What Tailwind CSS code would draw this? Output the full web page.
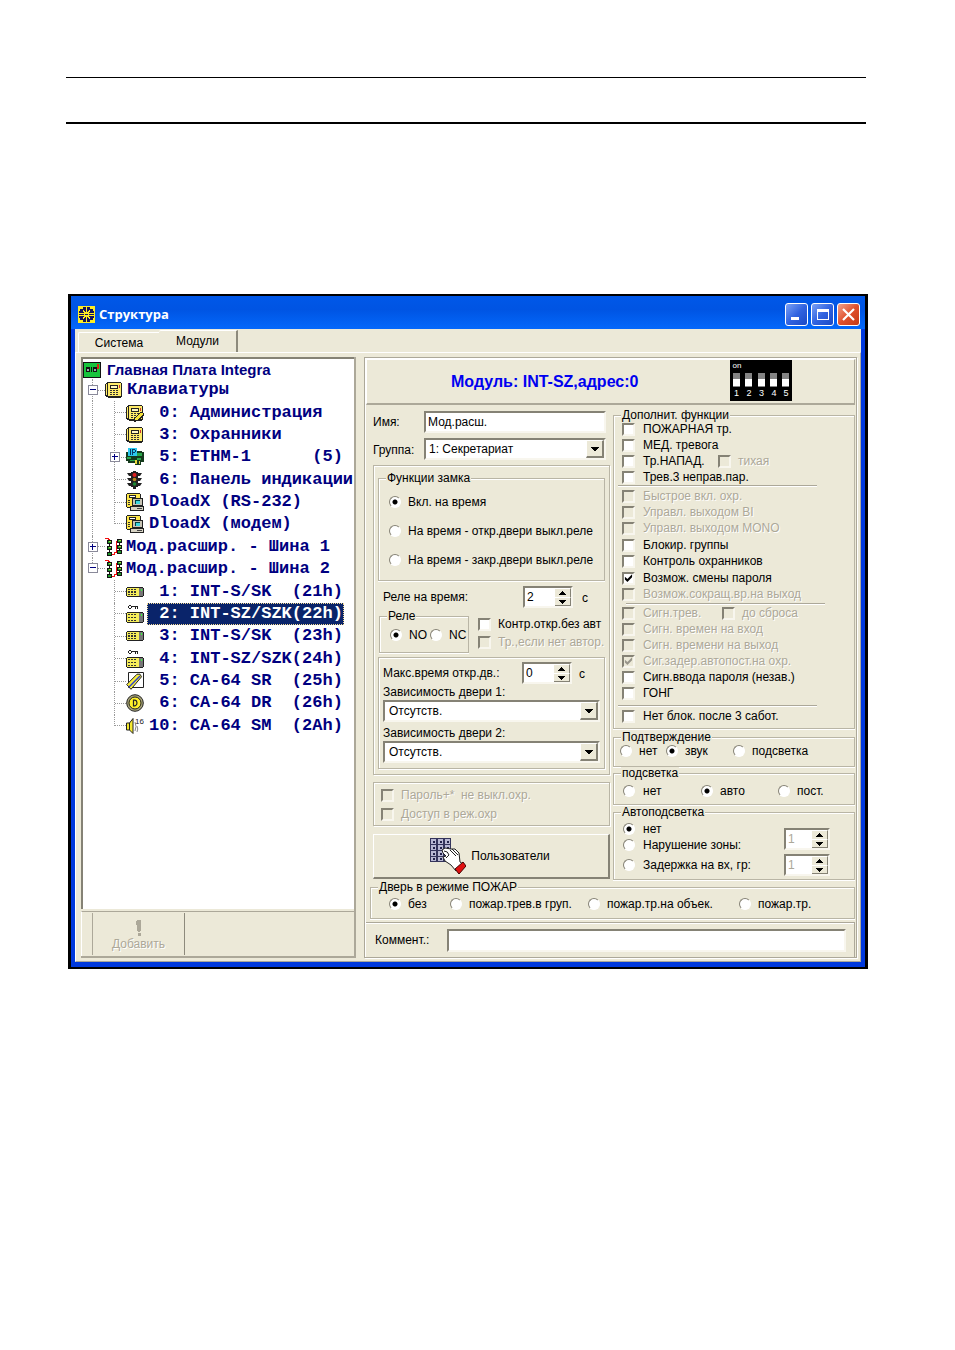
<!DOCTYPE html>
<html lang="ru">
<head>
    <meta charset="utf-8" />
    <meta name="viewport" content="width=device-width, initial-scale=1" />
    <title>Структура</title>
    <script src="https://cdn.jsdelivr.net/npm/@tailwindcss/browser@4"></script>
</head>
<body class="bg-white font-['Liberation_Sans',Arial,sans-serif] text-xs leading-4 text-black">
    <!-- shared icons -->
    <svg class="hidden">
        <symbol id="i-keypad" viewBox="0 0 18 18">
            <path d="M2 1h14v1h1v14h-1v1H3v-1H1v-1H0V3h1V2h1z" fill="#222" />
            <path d="M1 3h1v11H1zM3 2h13v13H3z" fill="#ffec6a" />
            <path d="M5 4h8v4H5z" fill="#222" /><path d="M6 5h6v2H6z" fill="#fff8c0" />
            <path d="M14 4h1v3h-1z" fill="#c33" />
            <path d="M5 9h2v1H5zM8 9h2v1H8zM11 9h2v1h-2zM5 11h2v1H5zM8 11h2v1H8zM11 11h2v1h-2zM5 13h2v1H5zM8 13h2v1H8zM11 13h2v1h-2z" fill="#333" />
        </symbol>
        <symbol id="i-download" viewBox="0 0 18 18">
            <path d="M1 0h13v1h1v14H1v-1H0V1h1z" fill="#222" /><path d="M1 1h13v13H1z" fill="#ffe84a" />
            <path d="M3 2h7v3H3z" fill="#222" /><path d="M4 3h5v1H4z" fill="#fff" />
            <path d="M2 7h2v1H2zM2 9h2v1H2zM2 11h2v1H2z" fill="#333" />
            <path d="M6 5h11v8H6z" fill="#222" /><path d="M7 6h9v6H7z" fill="#c8c4b4" />
            <path d="M9 7h5v4H9z" fill="#044" /><path d="M10 8h4v3h-4z" fill="#3cd6e0" />
            <path d="M4 13h14v5H4z" fill="#222" /><path d="M5 14h12v3H5z" fill="#d8d4c4" /><path d="M11 15h5v1h-5z" fill="#444" />
        </symbol>
        <symbol id="i-bus" viewBox="0 0 18 18">
            <path d="M0 0h4v1h1v15h4v-2h2V3h1V1h2v1h-1v2h-1v11h-2v2H4V2H3V1H0z" fill="#f01010" />
            <path d="M2 2h5v4H2zM2 8h5v4H2zM2 14h5v4H2zM12 1h5v4h-5zM12 7h5v4h-5zM12 12h5v4h-5zM4 6h1v2H4zM4 12h1v2H4zM14 5h1v2h-1zM14 11h1v1h-1z" fill="#111" />
            <path d="M3 3h3v2H3zM3 9h3v2H3zM3 15h3v2H3zM13 2h3v2h-3zM13 8h3v2h-3zM13 13h3v2h-3z" fill="#1f9a2c" />
            <path d="M4 3h2v1H4zM4 9h2v1H4zM14 2h2v1h-2zM14 8h2v1h-2z" fill="#a8dc3a" />
        </symbol>
        <symbol id="i-int" viewBox="0 0 18 18">
            <path d="M1 4h16v1h1v8h-1v1H1v-1H0V5h1z" fill="#222" />
            <path d="M1 5h12v8H1z" fill="#f6ee5a" /><path d="M13 5h4v8h-4z" fill="#777" />
            <path d="M15 6h1v2h-1z" fill="#3f3" />
            <path d="M2 6h2v1H2zM5 6h2v1H5zM8 6h2v1H8zM2 8h2v2H2zM5 8h2v2H5zM8 8h2v2H8zM2 11h2v1H2zM5 11h2v1H5zM8 11h2v1H8z" fill="#333" />
        </symbol>
        <symbol id="i-intkey" viewBox="0 0 18 18">
            <path d="M3 0h2v1h7v3h-1V2h-1v2H9V2H6v1H5v1H3V3H2V1h1zM3 1v2h2V1z" fill="#222" fill-rule="evenodd" />
            <path d="M1 7h16v1h1v9h-1v1H1v-1H0V8h1z" fill="#222" />
            <path d="M1 8h12v9H1z" fill="#f6ee5a" /><path d="M13 8h4v9h-4z" fill="#777" />
            <path d="M15 9h1v2h-1z" fill="#3f3" />
            <path d="M2 9h2v1H2zM5 9h2v1H5zM8 9h2v1H8zM2 12h2v1H2zM5 12h2v1H5zM8 12h2v1H8zM2 15h2v1H2zM5 15h2v1H5zM8 15h2v1H8z" fill="#333" />
        </symbol>
        <symbol id="i-spin" viewBox="0 0 7 4"><path d="M3 0h1v1h1v1h1v1h1v1H0V3h1V2h1V1h1z" fill="currentColor" /></symbol>
        <symbol id="i-drop" viewBox="0 0 8 4"><path d="M0 0h8v1H7v1H6v1H5v1H3V3H2V2H1V1H0z" fill="currentColor" /></symbol>
    </svg>

    <hr class="mx-[66px] mt-[77px] mr-[89px] h-px border-0 bg-black" />
    <hr class="mx-[66px] mt-[44px] mr-[89px] h-[2px] border-0 bg-black" />

    <div class="mt-[170px] mr-[87px] mb-10 ml-[68px] min-w-[800px] border-x-3 border-y-2 border-black bg-[#0039dd]">
        <!-- title bar -->
        <header class="flex h-[33px] items-center bg-linear-to-b from-[#0058e8] via-[#0054e3] via-40% to-[#0468fb] pt-[3px] pr-[5px] pl-[7px]">
            <svg class="size-[17px]" viewBox="0 0 17 17" shape-rendering="crispEdges">
                <path d="M0 0h17v17H0z" fill="#ffee22" />
                <path d="M5 1h3v5H7V5H6V4H5v2h1v1H1V5h1V3h3zM12 1H9v5h1V5h1V4h1v2h-1v1h5V5h-1V3h-3zM5 16h3v-5H7v1H6v1H5v-2h1v-1H1v2h1v2h3zM12 16H9v-5h1v1h1v1h1v-2h-1v-1h5v2h-1v2h-3zM1 8h5v1H1zM11 8h5v1h-5zM7 8h3v1H7z" fill="#15155a" />
            </svg>
            <h1 class="ml-[4px] flex-1 font-['Open_Sans','Noto_Sans',sans-serif] text-[13px] font-bold text-white">Структура</h1>
            <div class="flex gap-[3px]">
                <button aria-label="Свернуть" class="grid size-[23px] place-items-center rounded-[3px] border border-white bg-linear-to-br from-[#7ba0f5] via-[#3163e0] to-[#1a49c6]">
                    <svg class="size-[15px]" viewBox="0 0 15 15"><path d="M2 10h8v3H2z" fill="#fff" /></svg>
                </button>
                <button aria-label="Развернуть" class="grid size-[23px] place-items-center rounded-[3px] border border-white bg-linear-to-br from-[#7ba0f5] via-[#3163e0] to-[#1a49c6]">
                    <svg class="size-[15px]" viewBox="0 0 15 15"><path d="M2 2h12v11H2zM3 5v7h10V5z" fill="#fff" fill-rule="evenodd" /></svg>
                </button>
                <button aria-label="Закрыть" class="grid size-[23px] place-items-center rounded-[3px] border border-white bg-linear-to-br from-[#f0a08a] via-[#e0502c] to-[#c43a14]">
                    <svg class="size-[15px]" viewBox="0 0 15 15"><path d="M2 2l11 11M13 2L2 13" stroke="#fff" stroke-width="2.200" /></svg>
                </button>
            </div>
        </header>

        <div class="mx-[4px] mb-[5px] bg-[#ece9d8] pt-px">
            <nav class="flex h-[22px] items-end pl-[3px]">
                <button class="h-[20px] w-[81px] rounded-tl-[2px] border-t border-l border-white text-center">Система</button>
                <button class="h-[22px] w-[79px] rounded-tl-[2px] border-t border-r-2 border-t-white border-r-[#8d8a7c] pb-[2px] text-center">Модули</button>
            </nav>

            <main class="grid grid-cols-[275px_minmax(0,1fr)] gap-[8px] border border-white border-r-[#aca899] border-b-[#aca899] pt-[4px] pr-[3px] pb-[3px] pl-[5px]">
                <!-- module tree -->
                <section class="flex flex-col border-r-2 border-b-2 border-[#aca899] bg-[#ece9d8]">
                    <div class="flex-1 border-t-2 border-l-2 border-[#858275] bg-white pt-[2px] font-['Liberation_Mono','Courier_New',monospace] text-[17px] leading-5 font-bold text-[#000080]">
                        <div class="flex h-[18px] items-center gap-[5px]">
                            <svg class="size-[19px]" viewBox="0 0 19 19" shape-rendering="crispEdges">
                                <path d="M0 1h18v16H0z" fill="#111" /><path d="M1 2h16v14H1z" fill="#18c43c" />
                                <path d="M3 6h4v5H3zM8 6h1v5H8zM10 6h4v5h-4z" fill="#111" /><path d="M4 8h2v2H4zM11 8h2v2h-2z" fill="#9aa" /><path d="M14 3h2v5h-2z" fill="#d21" />
                            </svg>
                            <span class="font-['Liberation_Sans',Arial,sans-serif] text-[15px]">Главная Плата Integra</span>
                        </div>
                        <ul class="grid h-[358px] auto-rows-fr pl-[9px] whitespace-pre">
                            <li class="flex items-center">
                                <i class="relative flex w-[13px] items-center self-stretch border-l border-dotted border-[#999]"><i class="flex-1 border-t border-dotted border-[#999]"></i>
                                    <button aria-label="Свернуть ветвь" class="absolute -left-[5px] grid size-[10px] place-items-center border border-[#8a8a9a] bg-white"><svg class="size-[6px]" viewBox="0 0 6 6"><path d="M0 2h6v1H0z" fill="#000080" /></svg></button></i>
                                <svg class="size-[18px]" shape-rendering="crispEdges"><use href="#i-keypad" /></svg>
                                <span class="ml-[4px]">Клавиатуры</span>
                            </li>
                            <li class="flex items-center">
                                <i class="w-[22px] self-stretch border-l border-dotted border-[#999]"></i>
                                <i class="flex w-[12px] items-center self-stretch border-l border-dotted border-[#999]"><i class="flex-1 border-t border-dotted border-[#999]"></i></i>
                                <svg class="size-[18px]" viewBox="0 0 18 18" shape-rendering="crispEdges">
                                    <use href="#i-keypad" /><path d="M8 14l6-6h2l2 2v1l-6 6-4 1z" fill="#222" /><path d="M9 16v-2l5-5h2l1 1-6 6z" fill="#f6e23a" />
                                </svg>
                                <span class="ml-[4px] px-px"> 0: Администрация</span>
                            </li>
                            <li class="flex items-center">
                                <i class="w-[22px] self-stretch border-l border-dotted border-[#999]"></i>
                                <i class="flex w-[12px] items-center self-stretch border-l border-dotted border-[#999]"><i class="flex-1 border-t border-dotted border-[#999]"></i></i>
                                <svg class="size-[18px]" shape-rendering="crispEdges"><use href="#i-keypad" /></svg>
                                <span class="ml-[4px] px-px"> 3: Охранники</span>
                            </li>
                            <li class="flex items-center">
                                <i class="w-[22px] self-stretch border-l border-dotted border-[#999]"></i>
                                <i class="relative flex w-[12px] items-center self-stretch border-l border-dotted border-[#999]"><i class="flex-1 border-t border-dotted border-[#999]"></i>
                                    <button aria-label="Развернуть ветвь" class="absolute -left-[5px] grid size-[10px] place-items-center border border-[#8a8a9a] bg-white"><svg class="size-[6px]" viewBox="0 0 6 6"><path d="M0 2.500h6M2.500 0v6" stroke="#000080" /></svg></button></i>
                                <svg class="size-[18px]" viewBox="0 0 18 18" shape-rendering="crispEdges">
                                    <path d="M0 4h2v1h8V3h6v1h2v10h-3v3H9v-2H2v-2H0z" fill="#143a1c" />
                                    <path d="M1 9h4v2H1zM11 5h5v3h-5zM11 10h4v2h-4zM4 12h5v1H4z" fill="#2aa84a" />
                                    <path d="M2 0h9v8H2z" fill="#2cc8ee" /><path d="M4 1h1v6H4zM6 1h1v6H6zM7 1h2v1H7zM9 2h1v2H9zM7 4h2v1H7z" fill="#053a66" />
                                    <path d="M9 12h2v4H9zM13 13h1v3h-1z" fill="#e8d83a" />
                                </svg>
                                <span class="ml-[4px] px-px"> 5: ETHM-1      (5)</span>
                            </li>
                            <li class="flex items-center">
                                <i class="w-[22px] self-stretch border-l border-dotted border-[#999]"></i>
                                <i class="flex w-[12px] items-center self-stretch border-l border-dotted border-[#999]"><i class="flex-1 border-t border-dotted border-[#999]"></i></i>
                                <svg class="size-[18px]" viewBox="0 0 18 18">
                                    <path d="M5 1h7v15H5zM1 2h4v3H3zM1 7h4v3H3zM1 12h4v3H3zM16 2h-4v3h2zM16 7h-4v3h2zM16 12h-4v3h2zM7 16h3v2H7zM7 0h3v1H7z" fill="#222" />
                                    <circle cx="8.500" cy="4" r="2" fill="#e02020" /><circle cx="8.500" cy="8.500" r="1.800" fill="#b88a20" /><circle cx="8.500" cy="13" r="1.800" fill="#1c8a34" />
                                </svg>
                                <span class="ml-[4px] px-px"> 6: Панель индикации</span>
                            </li>
                            <li class="flex items-center">
                                <i class="w-[22px] self-stretch border-l border-dotted border-[#999]"></i>
                                <i class="flex w-[12px] items-center self-stretch border-l border-dotted border-[#999]"><i class="flex-1 border-t border-dotted border-[#999]"></i></i>
                                <svg class="size-[18px]" shape-rendering="crispEdges"><use href="#i-download" /></svg>
                                <span class="ml-[4px] px-px">DloadX (RS-232)</span>
                            </li>
                            <li class="flex items-center">
                                <i class="w-[22px] self-stretch border-l border-dotted border-[#999]"></i>
                                <i class="h-1/2 w-[12px] self-start border-b border-l border-dotted border-[#999]"></i>
                                <svg class="size-[18px]" shape-rendering="crispEdges"><use href="#i-download" /></svg>
                                <span class="ml-[4px] px-px">DloadX (модем)</span>
                            </li>
                            <li class="flex items-center">
                                <i class="relative flex w-[13px] items-center self-stretch border-l border-dotted border-[#999]"><i class="flex-1 border-t border-dotted border-[#999]"></i>
                                    <button aria-label="Развернуть ветвь" class="absolute -left-[5px] grid size-[10px] place-items-center border border-[#8a8a9a] bg-white"><svg class="size-[6px]" viewBox="0 0 6 6"><path d="M0 2.500h6M2.500 0v6" stroke="#000080" /></svg></button></i>
                                <svg class="size-[18px]" shape-rendering="crispEdges"><use href="#i-bus" /></svg>
                                <span class="ml-[3px]">Мод.расшир. - Шина 1</span>
                            </li>
                            <li class="flex items-center">
                                <i class="relative h-1/2 w-[13px] self-start border-b border-l border-dotted border-[#999]">
                                    <button aria-label="Свернуть ветвь" class="absolute -bottom-[5px] -left-[5px] grid size-[10px] place-items-center border border-[#8a8a9a] bg-white"><svg class="size-[6px]" viewBox="0 0 6 6"><path d="M0 2h6v1H0z" fill="#000080" /></svg></button></i>
                                <svg class="size-[18px]" shape-rendering="crispEdges"><use href="#i-bus" /></svg>
                                <span class="ml-[3px]">Мод.расшир. - Шина 2</span>
                            </li>
                            <li class="flex items-center pl-[22px]">
                                <i class="flex w-[12px] items-center self-stretch border-l border-dotted border-[#999]"><i class="flex-1 border-t border-dotted border-[#999]"></i></i>
                                <svg class="size-[18px]" shape-rendering="crispEdges"><use href="#i-int" /></svg>
                                <span class="ml-[4px] px-px"> 1: INT-S/SK  (21h)</span>
                            </li>
                            <li class="flex items-center pl-[22px]">
                                <i class="flex w-[12px] items-center self-stretch border-l border-dotted border-[#999]"><i class="flex-1 border-t border-dotted border-[#999]"></i></i>
                                <svg class="size-[18px]" shape-rendering="crispEdges"><use href="#i-intkey" /></svg>
                                <span class="ml-[3px] self-stretch border border-dotted border-[#f5db95] bg-[#0a246a] pl-px text-white"> 2: INT-SZ/SZK(22h)</span>
                            </li>
                            <li class="flex items-center pl-[22px]">
                                <i class="flex w-[12px] items-center self-stretch border-l border-dotted border-[#999]"><i class="flex-1 border-t border-dotted border-[#999]"></i></i>
                                <svg class="size-[18px]" shape-rendering="crispEdges"><use href="#i-int" /></svg>
                                <span class="ml-[4px] px-px"> 3: INT-S/SK  (23h)</span>
                            </li>
                            <li class="flex items-center pl-[22px]">
                                <i class="flex w-[12px] items-center self-stretch border-l border-dotted border-[#999]"><i class="flex-1 border-t border-dotted border-[#999]"></i></i>
                                <svg class="size-[18px]" shape-rendering="crispEdges"><use href="#i-intkey" /></svg>
                                <span class="ml-[4px] px-px"> 4: INT-SZ/SZK(24h)</span>
                            </li>
                            <li class="flex items-center pl-[22px]">
                                <i class="flex w-[12px] items-center self-stretch border-l border-dotted border-[#999]"><i class="flex-1 border-t border-dotted border-[#999]"></i></i>
                                <svg class="size-[18px]" viewBox="0 0 18 18">
                                    <path d="M2.500 .5h15v15h-15z" fill="#fff" stroke="#222" />
                                    <path d="M.7 12.500L11 2.200h3l1.500 2.600L5 17.300z" fill="#f8ee3c" stroke="#222" /><path d="M3 15L14 4" stroke="#2a3fd0" stroke-width="1.500" />
                                </svg>
                                <span class="ml-[4px] px-px"> 5: CA-64 SR  (25h)</span>
                            </li>
                            <li class="flex items-center pl-[22px]">
                                <i class="flex w-[12px] items-center self-stretch border-l border-dotted border-[#999]"><i class="flex-1 border-t border-dotted border-[#999]"></i></i>
                                <svg class="size-[18px]" viewBox="0 0 18 18">
                                    <circle cx="9" cy="9" r="8.300" fill="#a8a478" stroke="#222" /><circle cx="9" cy="9" r="6" fill="#fff02a" stroke="#222" />
                                    <path d="M7.500 6.200h1.500q2 .4 2 2.800t-2 2.800H7.500z" fill="none" stroke="#222" stroke-width="1.200" />
                                </svg>
                                <span class="ml-[4px] px-px"> 6: CA-64 DR  (26h)</span>
                            </li>
                            <li class="flex items-center pl-[22px]">
                                <i class="h-1/2 w-[12px] self-start border-b border-l border-dotted border-[#999]"></i>
                                <svg class="size-[18px]" viewBox="0 0 18 18">
                                    <path d="M.5 6h3L7 1.500v15L3.500 13h-3z" fill="#f6ea30" stroke="#222" /><path d="M3.500 6v7" stroke="#222" />
                                    <path d="M9 5q2 4.500 0 9M11 9q1.500 3 0 6" fill="none" stroke="#888" />
                                    <text x="9" y="7" font-family="Liberation Sans" font-size="8" font-weight="400" fill="#222">16</text>
                                </svg>
                                <span class="ml-[4px] px-px">10: CA-64 SM  (2Ah)</span>
                            </li>
                        </ul>
                    </div>
                    <div class="mt-[2px] flex h-[45px] border-t border-l border-t-[#aca899] border-l-white pl-[10px]">
                        <button disabled class="my-px flex w-[93px] flex-col items-center border-x border-l-[#aca899] border-r-[#8d8a7c] pt-[7px] text-[#aca899] [text-shadow:1px_1px_0_#fff]">
                            <svg class="h-[16px] w-[6px]" viewBox="0 0 6 16"><path d="M1 0h4v11H4v1H2v-1H1V5H0V1h1zM2 13h3v3H2z" fill="#aca899" /></svg>
                            Добавить
                        </button>
                    </div>
                </section>

                <!-- module settings -->
                <form class="border border-[#aca899] shadow-[inset_1px_1px_0_#fff,1px_1px_0_#fff] pt-px pr-px pl-px [&_fieldset]:min-w-0 [&_fieldset]:border [&_fieldset]:border-[#b9b5a5] [&_fieldset]:shadow-[inset_1px_1px_0_#fff,0_1px_0_#fff] [&_label]:whitespace-pre [&_legend]:ml-[7px] [&_legend]:h-[12px] [&_legend]:bg-[#ece9d8] [&_legend]:px-px [&_legend]:leading-3 [&_input[type=checkbox]]:size-[13px] [&_input[type=checkbox]]:shrink-0 [&_input[type=checkbox]]:appearance-none [&_input[type=checkbox]]:border-2 [&_input[type=checkbox]]:border-[#858275] [&_input[type=checkbox]]:border-r-[#f8f6ee] [&_input[type=checkbox]]:border-b-[#f8f6ee] [&_input[type=checkbox]]:bg-white [&_input[type=checkbox]:disabled]:bg-[#ece9d8] [&_input[type=checkbox]:checked]:before:block [&_input[type=checkbox]:checked]:before:size-[9px] [&_input[type=checkbox]:checked]:before:bg-black [&_input[type=checkbox]:checked]:before:[clip-path:polygon(10%_35%,38%_60%,90%_8%,90%_42%,38%_95%,10%_68%)] [&_input[type=checkbox]:checked:disabled]:before:bg-[#98958a] [&_input[type=radio]]:size-[12px] [&_input[type=radio]]:shrink-0 [&_input[type=radio]]:appearance-none [&_input[type=radio]]:rounded-full [&_input[type=radio]]:border [&_input[type=radio]]:border-[#858275] [&_input[type=radio]]:border-r-white [&_input[type=radio]]:border-b-white [&_input[type=radio]]:bg-white [&_input[type=radio]:checked]:bg-[radial-gradient(circle,#000_2px,#fff_3px)] [&_label:has(:disabled)]:text-[#aca899] [&_label:has(:disabled)]:[text-shadow:1px_1px_0_#fff]">
                    <header class="flex h-[46px] items-start border-t border-r border-b-2 border-l border-t-white border-r-[#aca899] border-b-[#aca899] border-l-white">
                        <h2 class="flex-1 self-center pl-[84px] text-base leading-4 font-bold text-[#0000f0]">Модуль: INT-SZ,адрес:0</h2>
                        <svg class="mr-[62px] h-[41px] w-[62px]" viewBox="0 0 62 41">
                            <path d="M0 0h62v41H0z" />
                            <path d="M3 13h7v14H3zM15 13h7v14h-7zM28 13h7v14h-7zM40 13h7v14h-7zM52 13h7v14h-7z" fill="#848484" />
                            <path d="M3 19h7v7H3zM15 19h7v7h-7zM28 19h7v7h-7zM40 19h7v7h-7zM52 19h7v7h-7z" fill="#fff" />
                            <g fill="#fff" font-family="Liberation Sans" font-size="9" text-anchor="middle">
                                <text x="7" y="8" font-size="8">on</text>
                                <text x="6.500" y="36">1</text><text x="19" y="36">2</text><text x="31.500" y="36">3</text><text x="44" y="36">4</text><text x="56" y="36">5</text>
                            </g>
                        </svg>
                    </header>

                    <div class="grid grid-cols-[237px_minmax(0,1fr)] gap-x-[3px] pl-[7px]">
                        <div class="pt-[6px]">
                            <div class="grid grid-cols-[51px_182px] items-center gap-y-[5px]">
                                <label for="name">Имя:</label>
                                <input id="name" value="Мод.расш." class="h-[22px] border-2 border-[#858275] border-r-[#f8f6ee] border-b-[#f8f6ee] bg-white px-[2px]" />
                                <label for="group" class="pt-[2px]">Группа:</label>
                                <div class="relative">
                                    <select id="group" class="h-[22px] w-full appearance-none border-2 border-[#858275] border-r-[#f8f6ee] border-b-[#f8f6ee] bg-white px-[3px]"><option>1: Секретариат</option></select>
                                    <span class="pointer-events-none absolute top-[2px] right-[2px] grid h-[18px] w-[18px] place-items-center border border-r-2 border-b-2 border-[#858275] border-t-white border-l-white bg-[#ece9d8]"><svg class="h-[4px] w-[8px]" shape-rendering="crispEdges"><use href="#i-drop" /></svg></span>
                                </div>
                            </div>

                            <div class="mt-[5px] border border-[#b9b5a5] px-[4px] pt-[6px] pb-[5px] shadow-[inset_1px_1px_0_#fff,1px_1px_0_#fff]">
                                <fieldset>
                                    <legend>Функции замка</legend>
                                    <div class="grid gap-[13px] pt-[10px] pb-[12px] pl-[10px]">
                                        <label class="flex items-center gap-[7px]"><input type="radio" name="lock" checked />Вкл. на время</label>
                                        <label class="flex items-center gap-[7px]"><input type="radio" name="lock" />На время - откр.двери выкл.реле</label>
                                        <label class="flex items-center gap-[7px]"><input type="radio" name="lock" />На время - закр.двери выкл.реле</label>
                                    </div>
                                </fieldset>
                                <div class="mt-[5px] flex items-center pl-[5px]">
                                    <label for="relay-time" class="w-[140px]">Реле на время:</label>
                                    <div class="flex h-[22px] w-[50px] border-2 border-[#858275] border-r-[#f8f6ee] border-b-[#f8f6ee] bg-white">
                                        <input id="relay-time" value="2" class="w-0 flex-1 pl-[2px]" />
                                        <div class="grid w-[16px] grid-rows-2 bg-[#ece9d8]">
                                            <button type="button" aria-label="Больше" class="grid place-items-center border-t border-r border-t-white border-r-[#858275]"><svg class="h-[4px] w-[7px]"><use href="#i-spin" /></svg></button>
                                            <button type="button" aria-label="Меньше" class="grid place-items-center border-t border-r border-b border-[#858275] border-t-white"><svg class="h-[4px] w-[7px] rotate-180"><use href="#i-spin" /></svg></button>
                                        </div>
                                    </div>
                                    <span class="ml-[9px] pt-[2px]">с</span>
                                </div>
                                <div class="mt-[2px] flex gap-[9px]">
                                    <fieldset class="ml-px w-[90px] shrink-0">
                                        <legend>Реле</legend>
                                        <div class="flex gap-[3px] pt-[5px] pb-[9px] pl-[10px]">
                                            <label class="flex items-center gap-[7px]"><input type="radio" name="relay" checked />NO</label>
                                            <label class="flex items-center gap-[7px]"><input type="radio" name="relay" />NC</label>
                                        </div>
                                    </fieldset>
                                    <div class="grid content-start gap-[2px] pt-[6px]">
                                        <label class="flex items-center gap-[7px]"><input type="checkbox" />Контр.откр.без авт</label>
                                        <label class="flex items-center gap-[7px]"><input type="checkbox" disabled />Тр.,если нет автор.</label>
                                    </div>
                                </div>
                                <div class="mt-[4px] border border-[#b9b5a5] px-[4px] pt-[4px] pb-[5px] shadow-[inset_1px_1px_0_#fff,1px_1px_0_#fff]">
                                    <div class="flex items-center">
                                        <label for="open-time" class="w-[139px]">Макс.время откр.дв.:</label>
                                        <div class="flex h-[22px] w-[50px] border-2 border-[#858275] border-r-[#f8f6ee] border-b-[#f8f6ee] bg-white">
                                            <input id="open-time" value="0" class="w-0 flex-1 pl-[2px]" />
                                            <div class="grid w-[16px] grid-rows-2 bg-[#ece9d8]">
                                                <button type="button" aria-label="Больше" class="grid place-items-center border-t border-r border-t-white border-r-[#858275]"><svg class="h-[4px] w-[7px]"><use href="#i-spin" /></svg></button>
                                                <button type="button" aria-label="Меньше" class="grid place-items-center border-t border-r border-b border-[#858275] border-t-white"><svg class="h-[4px] w-[7px] rotate-180"><use href="#i-spin" /></svg></button>
                                            </div>
                                        </div>
                                        <span class="ml-[7px] pt-[2px]">с</span>
                                    </div>
                                    <label for="door1" class="block">Зависимость двери 1:</label>
                                    <div class="relative">
                                        <select id="door1" class="h-[22px] w-full appearance-none border-2 border-[#858275] border-r-[#f8f6ee] border-b-[#f8f6ee] bg-white px-[4px]"><option>Отсутств.</option></select>
                                        <span class="pointer-events-none absolute top-[2px] right-[2px] grid h-[18px] w-[18px] place-items-center border border-r-2 border-b-2 border-[#858275] border-t-white border-l-white bg-[#ece9d8]"><svg class="h-[4px] w-[8px]" shape-rendering="crispEdges"><use href="#i-drop" /></svg></span>
                                    </div>
                                    <label for="door2" class="mt-[3px] block">Зависимость двери 2:</label>
                                    <div class="relative">
                                        <select id="door2" class="h-[22px] w-full appearance-none border-2 border-[#858275] border-r-[#f8f6ee] border-b-[#f8f6ee] bg-white px-[4px]"><option>Отсутств.</option></select>
                                        <span class="pointer-events-none absolute top-[2px] right-[2px] grid h-[18px] w-[18px] place-items-center border border-r-2 border-b-2 border-[#858275] border-t-white border-l-white bg-[#ece9d8]"><svg class="h-[4px] w-[8px]" shape-rendering="crispEdges"><use href="#i-drop" /></svg></span>
                                    </div>
                                </div>
                            </div>

                            <div class="mt-[7px] grid gap-[3px] border border-[#b9b5a5] pt-[4px] pb-[3px] pl-[7px] shadow-[inset_1px_1px_0_#fff,1px_1px_0_#fff]">
                                <label class="flex items-center gap-[7px]"><input type="checkbox" disabled />Пароль+*  не выкл.охр.</label>
                                <label class="flex items-center gap-[7px]"><input type="checkbox" disabled />Доступ в реж.охр</label>
                            </div>

                            <button type="button" class="mt-[8px] flex h-[45px] w-full items-center justify-center gap-[5px] border border-r-2 border-b-2 border-[#858275] border-t-white border-l-white pr-[2px]">
                                <svg class="size-[36px]" viewBox="0 0 36 36">
                                    <path d="M0 0h21v24H0z" fill="#34345c" />
                                    <path d="M1 1h5v5H1zM8 1h5v5H8zM15 1h5v5h-5zM1 7h5v5H1zM8 7h5v5H8zM15 7h5v5h-5zM1 13h5v5H1zM8 13h5v5H8zM1 19h5v4H1zM8 19h5v4H8z" fill="#b8b8d4" />
                                    <path d="M3 3h2v2H3zM10 3h2v2h-2zM17 3h2v2h-2zM3 9h2v2H3zM10 9h2v2h-2zM17 9h2v2h-2zM3 15h2v2H3zM10 15h2v2h-2zM3 20h2v2H3zM10 20h2v2h-2z" fill="#22224a" />
                                    <path d="M12 12l3-2 6 1 4 0 4 4 1 9 3 2-7 7-5-6-6-4-2-4 3-1-3-3z" fill="#fff" stroke="#222" />
                                    <path d="M14 13q4 0 5 4l-3 3M20 12l6 6M22 11l6 6" fill="none" stroke="#222" />
                                    <path d="M25 31l8-7 3 4-7 8z" fill="#e01010" stroke="#400" />
                                </svg>
                                Пользователи
                            </button>
                        </div>

                        <div class="pt-[4px]">
                            <fieldset>
                                <legend>Дополнит. функции</legend>
                                <div class="pr-[27px] pb-[4px] pl-[8px]">
                                    <label class="flex items-center gap-[8px]"><input type="checkbox" />ПОЖАРНАЯ тр.</label>
                                    <label class="flex items-center gap-[8px]"><input type="checkbox" />МЕД. тревога</label>
                                    <div class="flex">
                                        <label class="flex w-[96px] items-center gap-[8px]"><input type="checkbox" />Тр.НАПАД.</label>
                                        <label class="flex items-center gap-[7px]"><input type="checkbox" disabled />тихая</label>
                                    </div>
                                    <label class="flex items-center gap-[8px]"><input type="checkbox" />Трев.3 неправ.пар.</label>
                                    <hr class="-ml-[4px] mr-[10px] mb-px border-t border-b border-[#aca899] border-b-white" />
                                    <label class="flex items-center gap-[8px]"><input type="checkbox" disabled />Быстрое вкл. охр.</label>
                                    <label class="flex items-center gap-[8px]"><input type="checkbox" disabled />Управл. выходом BI</label>
                                    <label class="flex items-center gap-[8px]"><input type="checkbox" disabled />Управл. выходом MONO</label>
                                    <label class="mt-px flex items-center gap-[8px]"><input type="checkbox" />Блокир. группы</label>
                                    <label class="flex items-center gap-[8px]"><input type="checkbox" />Контроль охранников</label>
                                    <label class="mt-px flex items-center gap-[8px]"><input type="checkbox" checked />Возмож. смены пароля</label>
                                    <label class="flex items-center gap-[8px]"><input type="checkbox" disabled />Возмож.сокращ.вр.на выход</label>
                                    <hr class="ml-[4px] mt-px mr-[2px] border-t border-b border-[#aca899] border-b-white" />
                                    <div class="flex">
                                        <label class="flex w-[100px] items-center gap-[8px]"><input type="checkbox" disabled />Сигн.трев.</label>
                                        <label class="flex items-center gap-[7px]"><input type="checkbox" disabled />до сброса</label>
                                    </div>
                                    <label class="flex items-center gap-[8px]"><input type="checkbox" disabled />Сигн. времен на вход</label>
                                    <label class="flex items-center gap-[8px]"><input type="checkbox" disabled />Сигн. времени на выход</label>
                                    <label class="flex items-center gap-[8px]"><input type="checkbox" checked disabled />Сиг.задер.автопост.на охр.</label>
                                    <label class="flex items-center gap-[8px]"><input type="checkbox" />Сигн.ввода пароля (незав.)</label>
                                    <label class="flex items-center gap-[8px]"><input type="checkbox" />ГОНГ</label>
                                    <hr class="-ml-[4px] mt-[4px] mr-[10px] mb-px border-t border-b border-[#aca899] border-b-white" />
                                    <label class="flex items-center gap-[8px]"><input type="checkbox" />Нет блок. после 3 сабот.</label>
                                </div>
                            </fieldset>
                            <fieldset class="mt-[2px]">
                                <legend>Подтверждение</legend>
                                <div class="grid grid-cols-[46px_67px_1fr] pb-[7px] pl-[6px]">
                                    <label class="flex items-center gap-[7px]"><input type="radio" name="confirm" />нет</label>
                                    <label class="flex items-center gap-[7px]"><input type="radio" name="confirm" checked />звук</label>
                                    <label class="flex items-center gap-[7px]"><input type="radio" name="confirm" />подсветка</label>
                                </div>
                            </fieldset>
                            <fieldset>
                                <legend>подсветка</legend>
                                <div class="grid grid-cols-[78px_77px_1fr] pt-[4px] pb-[5px] pl-[9px]">
                                    <label class="flex items-center gap-[8px]"><input type="radio" name="light" />нет</label>
                                    <label class="flex items-center gap-[7px]"><input type="radio" name="light" checked />авто</label>
                                    <label class="flex items-center gap-[7px]"><input type="radio" name="light" />пост.</label>
                                </div>
                            </fieldset>
                            <fieldset class="mt-px">
                                <legend>Автоподсветка</legend>
                                <div class="flex pt-[3px] pb-[3px] pl-[9px]">
                                    <div class="w-[161px]">
                                        <label class="flex items-center gap-[8px]"><input type="radio" name="auto" checked />нет</label>
                                        <label class="flex items-center gap-[8px]"><input type="radio" name="auto" />Нарушение зоны:</label>
                                        <label class="mt-[4px] flex items-center gap-[8px]"><input type="radio" name="auto" />Задержка на вх, гр:</label>
                                    </div>
                                    <div class="grid gap-[4px] pt-[7px]">
                                        <div class="flex h-[22px] w-[46px] border-2 border-[#858275] border-r-[#f8f6ee] border-b-[#f8f6ee] bg-white">
                                            <input aria-label="Зона" value="1" disabled class="w-0 flex-1 pl-[2px] text-[#aca899]" />
                                            <div class="grid w-[16px] grid-rows-2 bg-[#ece9d8]">
                                                <button type="button" aria-label="Больше" class="grid place-items-center border-t border-r border-t-white border-r-[#858275]"><svg class="h-[4px] w-[7px]"><use href="#i-spin" /></svg></button>
                                                <button type="button" aria-label="Меньше" class="grid place-items-center border-t border-r border-b border-[#858275] border-t-white"><svg class="h-[4px] w-[7px] rotate-180"><use href="#i-spin" /></svg></button>
                                            </div>
                                        </div>
                                        <div class="flex h-[22px] w-[46px] border-2 border-[#858275] border-r-[#f8f6ee] border-b-[#f8f6ee] bg-white">
                                            <input aria-label="Группа задержки" value="1" disabled class="w-0 flex-1 pl-[2px] text-[#aca899]" />
                                            <div class="grid w-[16px] grid-rows-2 bg-[#ece9d8]">
                                                <button type="button" aria-label="Больше" class="grid place-items-center border-t border-r border-t-white border-r-[#858275]"><svg class="h-[4px] w-[7px]"><use href="#i-spin" /></svg></button>
                                                <button type="button" aria-label="Меньше" class="grid place-items-center border-t border-r border-b border-[#858275] border-t-white"><svg class="h-[4px] w-[7px] rotate-180"><use href="#i-spin" /></svg></button>
                                            </div>
                                        </div>
                                    </div>
                                </div>
                            </fieldset>
                        </div>
                    </div>

                    <fieldset class="mt-px ml-[4px]">
                        <legend>Дверь в режиме ПОЖАР</legend>
                        <div class="grid grid-cols-[61px_138px_151px_1fr] pt-[3px] pb-[6px] pl-[18px]">
                            <label class="flex items-center gap-[7px]"><input type="radio" name="fire" checked />без</label>
                            <label class="flex items-center gap-[7px]"><input type="radio" name="fire" />пожар.трев.в груп.</label>
                            <label class="flex items-center gap-[7px]"><input type="radio" name="fire" />пожар.тр.на объек.</label>
                            <label class="flex items-center gap-[7px]"><input type="radio" name="fire" />пожар.тр.</label>
                        </div>
                    </fieldset>

                    <div class="mt-[3px] flex h-[35px] items-center border-t border-r border-[#aca899] pr-[8px] pl-[9px] shadow-[inset_0_1px_0_#fff]">
                        <label for="comment" class="w-[72px]">Коммент.:</label>
                        <input id="comment" class="h-[23px] min-w-0 flex-1 border-2 border-[#858275] border-r-[#f8f6ee] border-b-[#f8f6ee] bg-white px-[2px]" />
                    </div>
                </form>
            </main>
        </div>
    </div>
</body>
</html>
